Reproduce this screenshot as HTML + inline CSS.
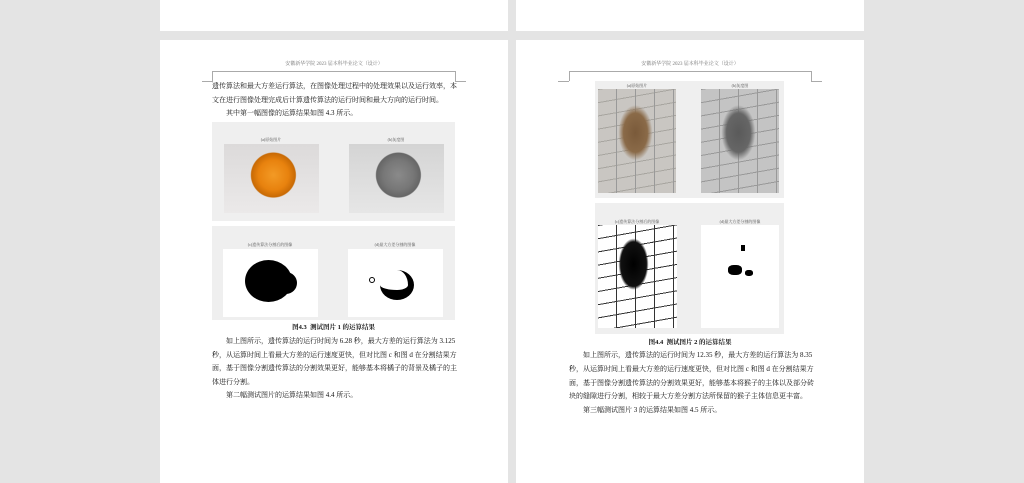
<!DOCTYPE html>
<html><head><meta charset="utf-8"><style>
*{margin:0;padding:0;box-sizing:border-box}
body{width:1024px;height:483px;background:#e4e4e4;position:relative;overflow:hidden;font-family:"Liberation Serif","Noto Serif CJK SC","Noto Sans CJK SC",serif;color:#222}
.pg{position:absolute;background:#fff}
.a{position:absolute}
.hd{position:absolute;font-size:5px;color:#777;text-align:center;width:300px}
.t{position:absolute;font-size:7px;line-height:7px;white-space:nowrap;color:#111}
.box{position:absolute;background:#efefef}
.cap{position:absolute;font-size:4px;color:#555;text-align:center;width:100px}
.ln{position:absolute;background:#aaa}
</style></head><body>
<div class="pg" style="left:160px;top:0;width:348px;height:31px"></div>
<div class="pg" style="left:516px;top:0;width:348px;height:31px"></div>
<div class="pg" style="left:160px;top:40px;width:348px;height:443px"></div>
<div class="pg" style="left:516px;top:40px;width:348px;height:443px"></div>

<div class="hd" style="left:184px;top:60px">安徽新华学院 2023 届本科毕业论文（设计）</div>
<div class="ln" style="left:212px;top:71px;width:243px;height:1px"></div>
<div class="ln" style="left:212px;top:71px;width:1px;height:10px"></div>
<div class="ln" style="left:455px;top:71px;width:1px;height:10px"></div>
<div class="ln" style="left:202px;top:81px;width:11px;height:1px"></div>
<div class="ln" style="left:455px;top:81px;width:11px;height:1px"></div>

<div class="t" style="left:212px;top:83px">遗传算法和最大方差运行算法，在图像处理过程中的处理效果以及运行效率，本</div>
<div class="t" style="left:212px;top:97px">文在进行图像处理完成后计算遗传算法的运行时间和最大方向的运行时间。</div>
<div class="t" style="left:226px;top:110px">其中第一幅图像的运算结果如图 4.3 所示。</div>

<div class="box" style="left:212px;top:122px;width:243px;height:99px"></div>
<div class="cap" style="left:221px;top:137px">(a)原始图片</div>
<div class="cap" style="left:346px;top:137px">(b)灰度图</div>
<div class="a" style="left:224px;top:144px;width:95px;height:69px;background:radial-gradient(circle at 52% 45%,#f39a25 0,#e8820e 15px,#c86a05 22px,rgba(200,106,5,0) 23px),linear-gradient(#dcdada,#ebe9e9)"></div>
<div class="a" style="left:349px;top:144px;width:95px;height:69px;background:radial-gradient(circle at 52% 45%,#8a8a8a 0,#777 15px,#666 22px,rgba(100,100,100,0) 23px),linear-gradient(#d4d4d4,#e6e6e6)"></div>

<div class="box" style="left:212px;top:226px;width:243px;height:94px"></div>
<div class="cap" style="left:220px;top:242px">(c)遗传算法分割后的图像</div>
<div class="cap" style="left:345px;top:242px">(d)最大方差分割的图像</div>
<div class="a" style="left:223px;top:249px;width:95px;height:68px;background:#fff"></div>
<div class="a" style="left:245px;top:260px;width:47px;height:42px;background:#000;border-radius:50%"></div>
<div class="a" style="left:275px;top:272px;width:22px;height:22px;background:#000;border-radius:50%"></div>
<div class="a" style="left:348px;top:249px;width:95px;height:68px;background:#fff"></div>
<div class="a" style="left:380px;top:270px;width:34px;height:30px;border-radius:50%;border-bottom:10px solid #000;border-right:6px solid #000"></div>
<div class="a" style="left:369px;top:277px;width:6px;height:6px;border:1.5px solid #000;border-radius:50%"></div>
<div class="t" style="left:212px;top:324px;width:243px;text-align:center;font-weight:bold;font-size:6.5px">图4.3&nbsp; 测试图片 1 的运算结果</div>
<div class="t" style="left:226px;top:338px">如上图所示，遗传算法的运行时间为 6.28 秒，最大方差的运行算法为 3.125</div>
<div class="t" style="left:212px;top:352px">秒，从运算时间上看最大方差的运行速度更快，但对比图 c 和图 d 在分割结果方</div>
<div class="t" style="left:212px;top:365px">面，基于图像分割遗传算法的分割效果更好，能够基本将橘子的背景及橘子的主</div>
<div class="t" style="left:212px;top:379px">体进行分割。</div>
<div class="t" style="left:226px;top:392px">第二幅测试图片的运算结果如图 4.4 所示。</div>

<div class="hd" style="left:540px;top:60px">安徽新华学院 2023 届本科毕业论文（设计）</div>
<div class="ln" style="left:569px;top:71px;width:242px;height:1px"></div>
<div class="ln" style="left:569px;top:71px;width:1px;height:10px"></div>
<div class="ln" style="left:811px;top:71px;width:1px;height:10px"></div>
<div class="ln" style="left:558px;top:81px;width:11px;height:1px"></div>
<div class="ln" style="left:811px;top:81px;width:11px;height:1px"></div>

<div class="box" style="left:595px;top:81px;width:189px;height:117px"></div>
<div class="cap" style="left:587px;top:83px">(a)原始图片</div>
<div class="cap" style="left:690px;top:83px">(b)灰度图</div>
<div class="a" style="left:598px;top:89px;width:78px;height:104px;background:radial-gradient(ellipse 16px 26px at 48% 42%,#7a5a3a 0,#8a6a48 12px,rgba(140,110,80,0) 17px),repeating-linear-gradient(90deg,rgba(0,0,0,0) 0,rgba(0,0,0,0) 18px,#999 18px,#999 19px),repeating-linear-gradient(170deg,#a8a5a0 0,#a8a5a0 1px,#c9c6c2 1px,#c9c6c2 13px)"></div>
<div class="a" style="left:701px;top:89px;width:78px;height:104px;background:radial-gradient(ellipse 16px 26px at 48% 42%,#5a5a5a 0,#666 12px,rgba(110,110,110,0) 17px),repeating-linear-gradient(90deg,rgba(0,0,0,0) 0,rgba(0,0,0,0) 18px,#999 18px,#999 19px),repeating-linear-gradient(170deg,#999 0,#999 1px,#c4c4c4 1px,#c4c4c4 13px)"></div>

<div class="box" style="left:595px;top:203px;width:189px;height:131px"></div>
<div class="cap" style="left:587px;top:219px">(c)遗传算法分割后的图像</div>
<div class="cap" style="left:690px;top:219px">(d)最大方差分割的图像</div>
<div class="a" style="left:598px;top:225px;width:79px;height:103px;background:radial-gradient(ellipse 14px 24px at 45% 38%,#000 0,#111 13px,rgba(0,0,0,0) 15px),repeating-linear-gradient(90deg,rgba(0,0,0,0) 0,rgba(0,0,0,0) 18px,#333 18px,#333 19px),repeating-linear-gradient(170deg,#333 0,#333 1px,#fff 1px,#fff 13px)"></div>
<div class="a" style="left:701px;top:225px;width:78px;height:103px;background:#fff"></div>
<div class="a" style="left:728px;top:265px;width:14px;height:10px;background:#000;border-radius:40%"></div>
<div class="a" style="left:741px;top:245px;width:4px;height:6px;background:#000"></div>
<div class="a" style="left:745px;top:270px;width:8px;height:6px;background:#000;border-radius:40%"></div>
<div class="t" style="left:569px;top:339px;width:242px;text-align:center;font-weight:bold;font-size:6.5px">图4.4&nbsp; 测试图片 2 的运算结果</div>
<div class="t" style="left:583px;top:352px">如上图所示，遗传算法的运行时间为 12.35 秒，最大方差的运行算法为 8.35</div>
<div class="t" style="left:569px;top:366px">秒，从运算时间上看最大方差的运行速度更快，但对比图 c 和图 d 在分割结果方</div>
<div class="t" style="left:569px;top:380px">面，基于图像分割遗传算法的分割效果更好，能够基本将猴子的主体以及部分砖</div>
<div class="t" style="left:569px;top:393px">块的缝隙进行分割，相较于最大方差分割方法所保留的猴子主体信息更丰富。</div>
<div class="t" style="left:583px;top:407px">第三幅测试图片 3 的运算结果如图 4.5 所示。</div>
</body></html>
